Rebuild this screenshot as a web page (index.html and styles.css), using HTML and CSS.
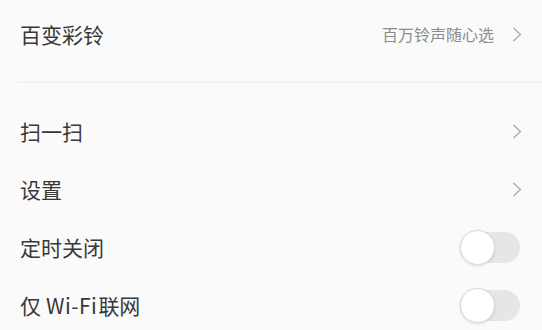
FILE: index.html
```html
<!DOCTYPE html>
<html lang="zh-CN">
<head>
    <meta charset="UTF-8">
    <meta name="viewport" content="width=device-width, initial-scale=1.0">
    <title>设置</title>
    <link rel="stylesheet" href="styles.css">
</head>
<body>

<div class="section top">
    <div class="row first">
        <span class="label">百变彩铃</span>
        <span class="extra">百万铃声随心选</span>
        <svg class="chevron" viewBox="0 0 10 15"><polyline points="1.5,1 8.5,7.5 1.5,14"/></svg>
    </div>
</div>

<div class="section list">
    <div class="row">
        <span class="label">扫一扫</span>
        <svg class="chevron" viewBox="0 0 10 15"><polyline points="1.5,1 8.5,7.5 1.5,14"/></svg>
    </div>
    <div class="row">
        <span class="label">设置</span>
        <svg class="chevron" viewBox="0 0 10 15"><polyline points="1.5,1 8.5,7.5 1.5,14"/></svg>
    </div>
    <div class="row">
        <span class="label">定时关闭</span>
        <div class="switch"><div class="knob"></div></div>
    </div>
    <div class="row">
        <span class="label">仅<span class="latin">Wi-Fi</span>联网</span>
        <div class="switch"><div class="knob"></div></div>
    </div>
</div>

</body>
</html>
```

FILE: styles.css
```css
/* General Styles */
body {
    margin: 0;
    padding: 0;
    background-color: #fafafa;
    font-family: "Noto Sans CJK SC", "Noto Sans", sans-serif;
    color: #333;
    overflow: hidden;
}

.section.top {
    margin-left: 18px;
    padding-bottom: 13px;
    border-bottom: 2px solid #f2f2f2;
}

.section.list {
    padding-top: 19px;
}

.row {
    display: flex;
    align-items: center;
    height: 58px;
    padding: 0 20px 0 20px;
}

.section.top .row {
    height: 68px;
    padding-left: 2px;
}

.label {
    flex: 1;
    font-size: 21px;
    line-height: 1;
    color: #383838;
}

.label .latin {
    margin: 0 1px 0 5px;
    letter-spacing: 0.5px;
}

.extra {
    font-size: 16px;
    color: #8c8c8c;
    margin-right: 18px;
}

.chevron {
    width: 10px;
    height: 15px;
    fill: none;
    stroke: #a8a8a8;
    stroke-width: 1.3;
}

/* Toggle */
.switch {
    display: flex;
    align-items: center;
    width: 60px;
    height: 31px;
    margin-right: 2px;
    border-radius: 16px;
    background-color: #e6e6e6;
}

.knob {
    flex-shrink: 0;
    width: 33px;
    height: 33px;
    border-radius: 50%;
    background-color: #fff;
    border: 1px solid #d8d8d8;
    box-shadow: 0 1px 3px rgba(0, 0, 0, 0.12);
}
```
